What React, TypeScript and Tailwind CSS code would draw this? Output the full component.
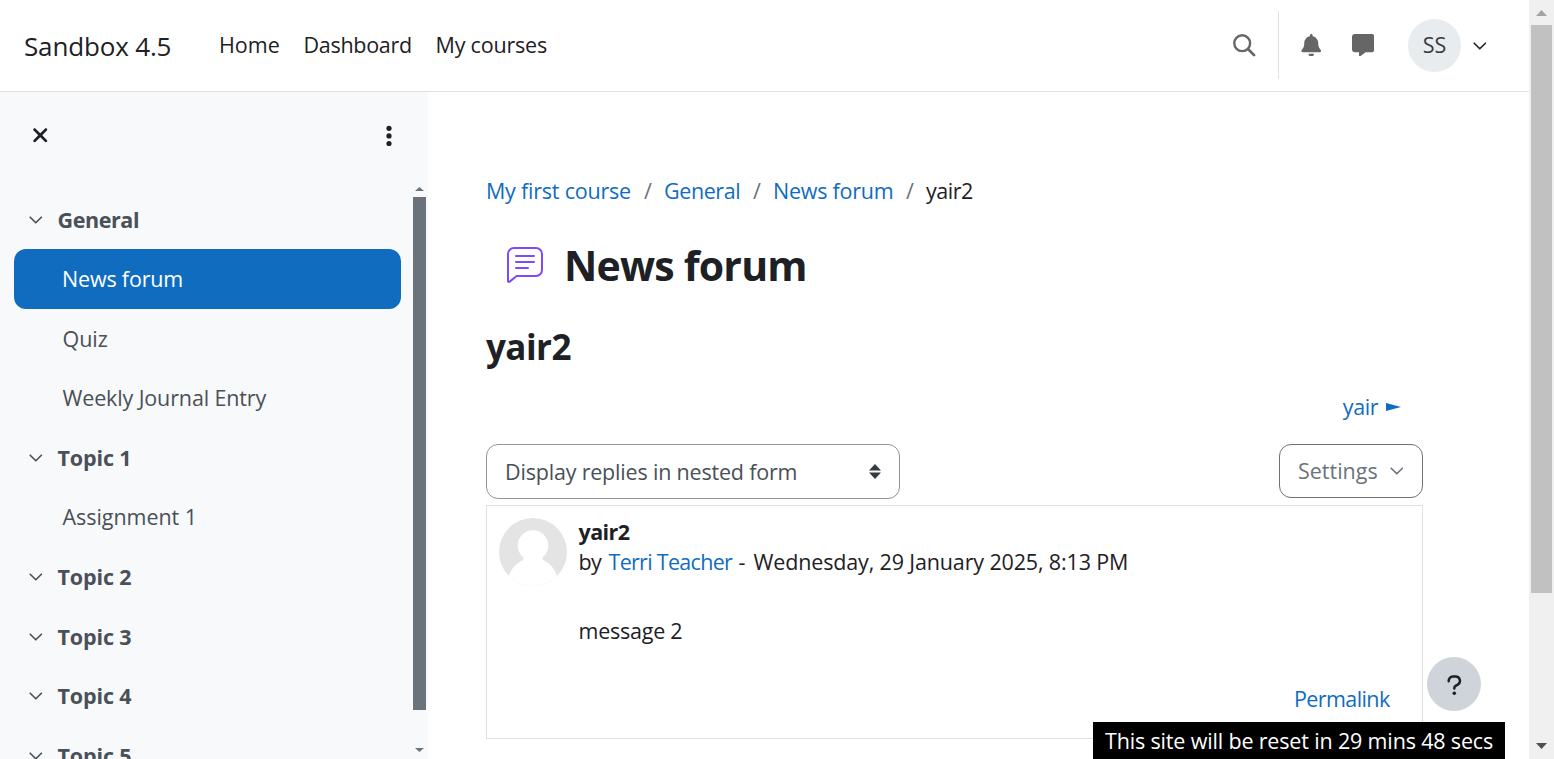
import { FaBell, FaMessage, FaXmark } from 'react-icons/fa6';

function Chevron({ className = '' }: { className?: string }) {
  return (
    <svg width="14" height="8" viewBox="0 0 14 8" className={className}>
      <path d="M1.200 1.200l5.600 5.600 5.600-5.600" fill="none" stroke="currentColor" strokeWidth="1.600" strokeLinecap="round" strokeLinejoin="round" />
    </svg>
  );
}

function SearchIcon() {
  return (
    <svg width="23" height="23" viewBox="0 0 23 23" fill="none" stroke="currentColor" strokeLinecap="round">
      <circle cx="9.200" cy="9.200" r="7.900" strokeWidth="2.400" />
      <path d="M15.200 15.200l5.900 5.900" strokeWidth="2.700" />
    </svg>
  );
}

function QuestionIcon() {
  return (
    <svg width="15" height="21" viewBox="0 0 15 21" fill="none" stroke="currentColor" strokeWidth="2.500" strokeLinecap="round" strokeLinejoin="round">
      <path d="M1.700 6.200V5.600a4 4 0 0 1 4-4h2.800a4.300 4.300 0 0 1 2.300 8L8.600 10.900A2.500 2.500 0 0 0 7.300 13v.6" />
      <circle cx="7.300" cy="18.200" r="1.800" fill="currentColor" stroke="none" />
    </svg>
  );
}

function ForumIcon() {
  return (
    <svg width="36" height="36" viewBox="0 0 36 36" fill="none" stroke="#7f48ff" strokeWidth="2" strokeLinecap="round" strokeLinejoin="round">
      <path d="M1 33.8V7a6 6 0 0 1 6-6h22a6 6 0 0 1 6 6v16a6 6 0 0 1-6 6H9.6L2.7 34.6A1 1 0 0 1 1 33.8z" />
      <path d="M9 9h18M9 15h18M9 21h12" />
    </svg>
  );
}

function UserPicture() {
  return (
    <svg width="68" height="68" viewBox="0 0 68 68" className="block">
      <clipPath id="picture">
        <circle cx="34" cy="34" r="34" />
      </clipPath>
      <g clipPath="url(#picture)">
        <rect width="68" height="68" fill="#e4e4e4" />
        <circle cx="34" cy="27.5" r="15.3" fill="#fff" />
        <path d="M24 40c1 1 .5 2-1 2.800C16 46 11.500 52 9.500 60L6 68h56l-3.500-8C56.500 52 52 46 45 42.800 43.500 42 43 41 44 40z" fill="#fff" />
      </g>
    </svg>
  );
}

type Entry = { label: string; kind: 'section' | 'item' | 'active'; tracking: string };

const entries: Entry[] = [
  { label: 'General', kind: 'section', tracking: 'tracking-[-0.4px]' },
  { label: 'News forum', kind: 'active', tracking: 'tracking-[-0.18px]' },
  { label: 'Quiz', kind: 'item', tracking: 'tracking-[-0.04px]' },
  { label: 'Weekly Journal Entry', kind: 'item', tracking: 'tracking-[-0.13px]' },
  { label: 'Topic 1', kind: 'section', tracking: 'tracking-[-0.12px]' },
  { label: 'Assignment 1', kind: 'item', tracking: 'tracking-[-0.05px]' },
  { label: 'Topic 2', kind: 'section', tracking: 'tracking-[-0.12px]' },
  { label: 'Topic 3', kind: 'section', tracking: 'tracking-[-0.12px]' },
  { label: 'Topic 4', kind: 'section', tracking: 'tracking-[-0.12px]' },
  { label: 'Topic 5', kind: 'section', tracking: 'tracking-[-0.12px]' },
];

function IndexRow({ label, kind, tracking }: Entry) {
  if (kind === 'section') {
    return (
      <div className="flex h-[59.5px] shrink-0 items-center pt-px pl-[15px] font-bold text-[#495057]">
        <Chevron />
        <span className={`ml-[14.5px] ${tracking}`}>{label}</span>
      </div>
    );
  }
  return (
    <div
      className={
        kind === 'active'
          ? 'flex h-[59.5px] shrink-0 items-center rounded-xl bg-[#0f6cbf] pl-[48px] text-white'
          : 'flex h-[59.5px] shrink-0 items-center pl-[48.5px] text-[#495057]'
      }
    >
      <span className={tracking}>{label}</span>
    </div>
  );
}

function Header() {
  return (
    <header className="flex h-[92px] shrink-0 items-center border-b border-[#dee2e6] bg-white pl-6">
      <span className="w-[195px] pt-px text-[26px] tracking-[-0.16px]">Sandbox 4.5</span>
      <nav className="flex flex-1 pb-px">
        <a className="w-[84.5px]">Home</a>
        <a className="w-[132px] tracking-[-0.3px]">Dashboard</a>
        <a className="tracking-[-0.2px]">My courses</a>
      </nav>
      <div className="flex items-center text-[#666]">
        <SearchIcon />
        <div className="mb-px ml-[22px] h-[68px] w-px bg-[#dee2e6]" />
        <FaBell size={22.5} className="mb-px ml-[21px]" />
        <FaMessage size={22.5} className="mb-px ml-[29px]" />
        <div className="ml-[34px] flex size-[53px] items-center justify-center rounded-full bg-[#e9ecef] pb-px text-[#343a40]">SS</div>
        <Chevron className="mr-[42px] ml-3 text-[#1d2125]" />
      </div>
    </header>
  );
}

function Sidebar() {
  return (
    <aside className="flex w-[428px] shrink-0 flex-col bg-[#f8f9fa]">
      <div className="flex h-[94.750px] shrink-0 items-start justify-between pt-8 pr-[36.5px] pl-[29px]">
        <FaXmark size={22.5} />
        <svg width="6" height="22" viewBox="0 0 6 22" fill="currentColor" className="mt-[1px]">
          <circle cx="3" cy="3.300" r="2.600" />
          <circle cx="3" cy="10.900" r="2.600" />
          <circle cx="3" cy="18.500" r="2.600" />
        </svg>
      </div>
      <div className="flex min-h-0 flex-1 overflow-hidden">
        <div className="ml-[14px] flex w-[387px] flex-col pt-[3px]">
          {entries.map((e) => (
            <IndexRow key={e.label} {...e} />
          ))}
        </div>
        <div className="ml-3 flex w-[13px] flex-col items-center">
          <svg width="9" height="4" viewBox="0 0 9 4" className="shrink-0">
            <path d="M4.500 0L9 4H0z" fill="#6a737b" />
          </svg>
          <div className="mt-[6px] h-[513px] w-[13px] shrink-0 bg-[#6a737b]" />
          <svg width="9" height="4" viewBox="0 0 9 4" className="mt-[38px] shrink-0">
            <path d="M4.500 4L0 0h9z" fill="#6a737b" />
          </svg>
        </div>
      </div>
    </aside>
  );
}

function Post() {
  return (
    <article className="mt-[6px] flex h-[234px] w-[937px] border border-[#dee2e6] pt-3 pl-3">
      <UserPicture />
      <div className="ml-[11.5px] flex flex-1 flex-col">
        <h3 className="-mt-px font-bold tracking-[-0.6px]">yair2</h3>
        <div className="flex">
          <span className="w-[30px] tracking-[-0.6px]">by</span>
          <a className="w-[130px] tracking-[-0.7px] text-[#0f6cbf]">Terri Teacher</a>
          <span className="w-[15px]">-</span>
          <time className="tracking-[-0.14px]">Wednesday, 29 January 2025, 8:13 PM</time>
        </div>
        <p className="mt-[39px] tracking-[-0.24px]">message 2</p>
        <a className="mt-[38px] ml-[715.5px] tracking-[-0.59px] text-[#0f6cbf]">Permalink</a>
      </div>
    </article>
  );
}

function Main() {
  return (
    <main className="flex min-w-0 flex-1 flex-col pl-[58px]">
      <nav className="mt-[84px] flex text-[#0f6cbf]">
        <a className="w-[158px] tracking-[-0.22px]">My first course</a>
        <span className="w-5 text-[#6a737b]">/</span>
        <a className="w-[89px] tracking-[-0.4px]">General</a>
        <span className="w-5 text-[#6a737b]">/</span>
        <a className="w-[133px] tracking-[-0.25px]">News forum</a>
        <span className="w-5 text-[#6a737b]">/</span>
        <span className="tracking-[-0.5px] text-[#1d2125]">yair2</span>
      </nav>
      <div className="mt-[34px] flex h-[50px] items-center pl-[21px]">
        <ForumIcon />
        <h1 className="ml-[21px] text-[41px] leading-[50px] font-bold tracking-[-0.8px]">News forum</h1>
      </div>
      <h2 className="mt-8 text-[35px] leading-[50px] font-bold tracking-[-0.55px]">yair2</h2>
      <a className="mt-5 flex w-[915px] items-center justify-end text-[#0f6cbf]">
        <span className="tracking-[-0.45px]">yair</span>
        <svg width="15" height="8" viewBox="0 0 15 8" className="ml-2">
          <path d="M0 0l15 4-15 4z" fill="currentColor" />
        </svg>
      </a>
      <div className="mt-[22px] flex h-[55px] w-[937px] items-start justify-between">
        <div className="flex h-[55px] w-[414px] items-center justify-between rounded-xl border border-[#8f959e] pr-[18px] pl-[18px] text-[#495057]">
          <span className="tracking-[-0.19px]">Display replies in nested form</span>
          <svg width="12" height="15" viewBox="0 0 12 15" fill="#343a40">
            <path d="M6 0l6 6.500H0zM6 15L0 8.500h12z" />
          </svg>
        </div>
        <div className="flex h-[54px] w-[144px] items-center justify-between rounded-xl border border-[#6a737b] pr-[18px] pl-[18px] text-[#6a737b]">
          <span className="pb-px">Settings</span>
          <Chevron />
        </div>
      </div>
      <Post />
    </main>
  );
}

function PageScrollbar() {
  return (
    <div className="flex w-[25px] shrink-0 flex-col items-center bg-[#f0f0f0]">
      <svg width="11" height="6" viewBox="0 0 12 6" preserveAspectRatio="none" className="mt-[10px] shrink-0">
        <path d="M6 0l6 6H0z" fill="#a3a3a3" />
      </svg>
      <div className="mt-[9px] h-[568px] w-[21px] shrink-0 bg-[#c1c1c1]" />
      <svg width="11" height="6" viewBox="0 0 12 6" preserveAspectRatio="none" className="mt-[150px] shrink-0">
        <path d="M6 6L0 0h12z" fill="#505050" />
      </svg>
    </div>
  );
}

export default function App() {
  return (
    <div className="relative flex h-[759px] w-[1554px] overflow-hidden bg-white font-['Open_Sans','Noto_Sans',sans-serif] text-[21.5px] leading-[30px] whitespace-nowrap text-[#1d2125]">
      <div className="flex min-w-0 flex-1 flex-col">
        <Header />
        <div className="flex min-h-0 flex-1">
          <Sidebar />
          <Main />
        </div>
      </div>
      <PageScrollbar />
      <button className="absolute top-[657px] left-[1427px] flex size-[54px] items-center justify-center rounded-full bg-[#ced4da] pt-[3px]">
        <QuestionIcon />
      </button>
      <div className="absolute top-[722px] left-[1093px] h-[37px] w-[412px] bg-black pt-1 pl-3 tracking-[-0.16px] text-white">
        This site will be reset in 29 mins 48 secs
      </div>
    </div>
  );
}
